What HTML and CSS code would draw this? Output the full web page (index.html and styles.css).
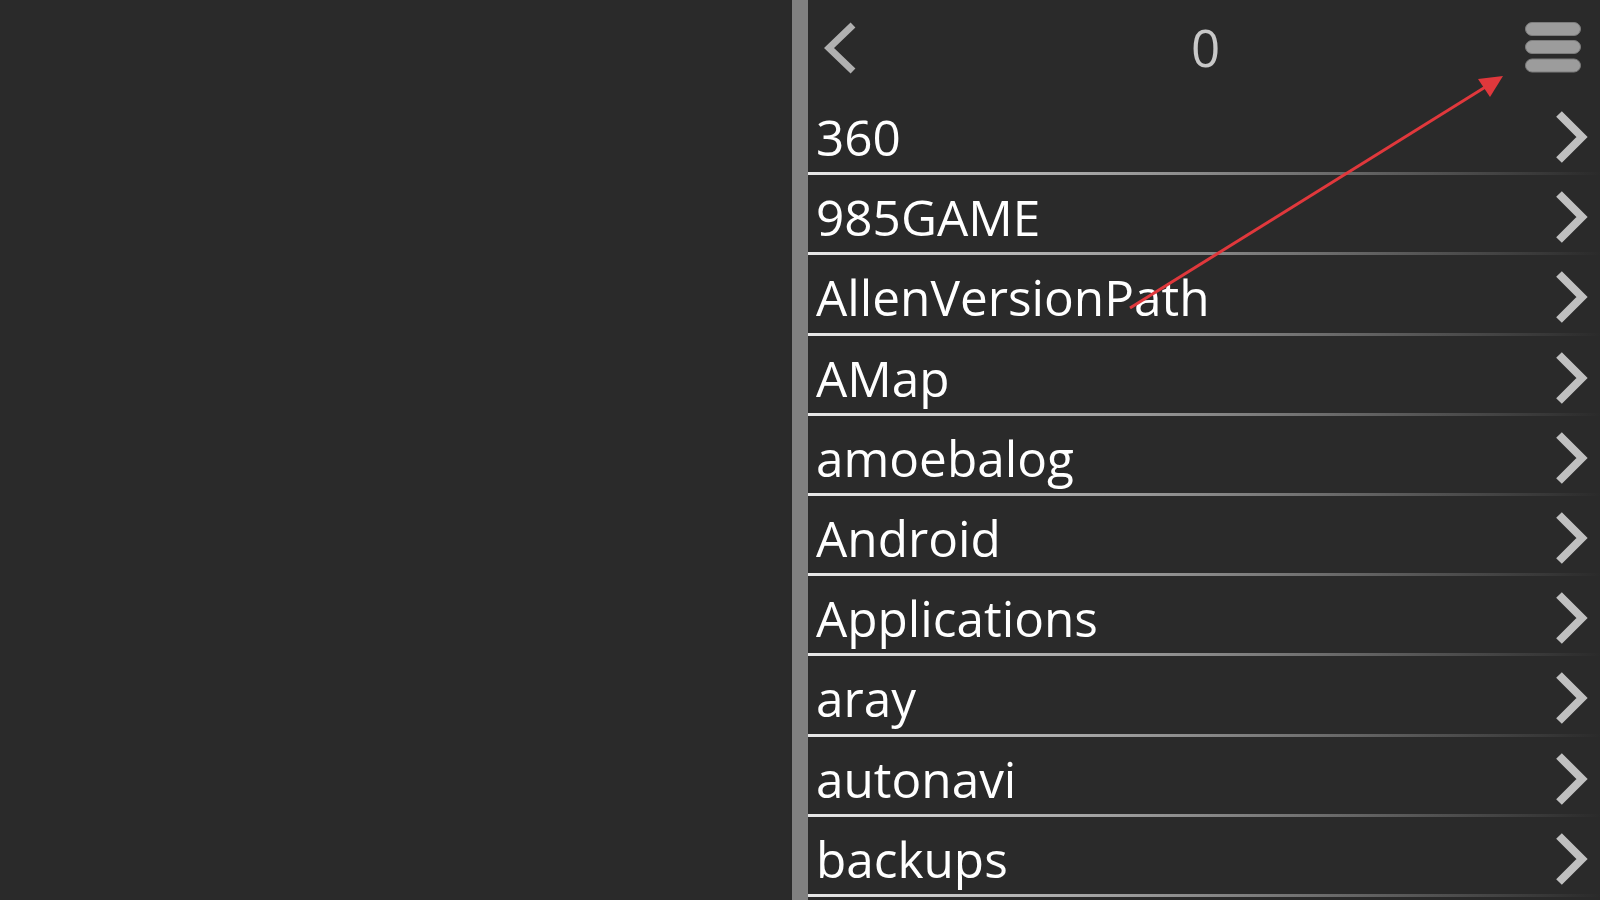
FILE: index.html
```html
<!DOCTYPE html>
<html>
<head>
<meta charset="utf-8">
<link rel="stylesheet" href="styles.css">
</head>
<body>
<div class="app">
  <div class="left-pane"></div>
  <div class="split-bar"></div>
  <div class="panel">
    <div class="header">
      <svg class="back" width="32" height="52" viewBox="0 0 32 52">
        <polyline points="29,3 5,26 29,49" fill="none" stroke="#b0b0b0" stroke-width="7" stroke-linejoin="miter"/>
      </svg>
      <div class="title">0</div>
      <svg class="menu" width="56" height="51" viewBox="0 0 56 51">
        <rect x="0.5" y="0.5" width="55" height="13" rx="6.5" fill="#9c9c9c" stroke="#7c7c7c"/>
        <rect x="0.5" y="18.5" width="55" height="13" rx="6.5" fill="#9c9c9c" stroke="#7c7c7c"/>
        <rect x="0.5" y="37" width="55" height="13" rx="6.5" fill="#9c9c9c" stroke="#7c7c7c"/>
      </svg>
    </div>
    <div class="list">
      <div class="row"><span class="label">360</span><svg class="chev" width="32" height="52" viewBox="0 0 32 52"><polyline points="3,3 26,26 3,49" fill="none" stroke="#c0c0c0" stroke-width="8"/></svg></div>
      <div class="row"><span class="label">985GAME</span><svg class="chev" width="32" height="52" viewBox="0 0 32 52"><polyline points="3,3 26,26 3,49" fill="none" stroke="#c0c0c0" stroke-width="8"/></svg></div>
      <div class="row"><span class="label">AllenVersionPath</span><svg class="chev" width="32" height="52" viewBox="0 0 32 52"><polyline points="3,3 26,26 3,49" fill="none" stroke="#c0c0c0" stroke-width="8"/></svg></div>
      <div class="row"><span class="label">AMap</span><svg class="chev" width="32" height="52" viewBox="0 0 32 52"><polyline points="3,3 26,26 3,49" fill="none" stroke="#c0c0c0" stroke-width="8"/></svg></div>
      <div class="row"><span class="label">amoebalog</span><svg class="chev" width="32" height="52" viewBox="0 0 32 52"><polyline points="3,3 26,26 3,49" fill="none" stroke="#c0c0c0" stroke-width="8"/></svg></div>
      <div class="row"><span class="label">Android</span><svg class="chev" width="32" height="52" viewBox="0 0 32 52"><polyline points="3,3 26,26 3,49" fill="none" stroke="#c0c0c0" stroke-width="8"/></svg></div>
      <div class="row"><span class="label">Applications</span><svg class="chev" width="32" height="52" viewBox="0 0 32 52"><polyline points="3,3 26,26 3,49" fill="none" stroke="#c0c0c0" stroke-width="8"/></svg></div>
      <div class="row"><span class="label">aray</span><svg class="chev" width="32" height="52" viewBox="0 0 32 52"><polyline points="3,3 26,26 3,49" fill="none" stroke="#c0c0c0" stroke-width="8"/></svg></div>
      <div class="row"><span class="label">autonavi</span><svg class="chev" width="32" height="52" viewBox="0 0 32 52"><polyline points="3,3 26,26 3,49" fill="none" stroke="#c0c0c0" stroke-width="8"/></svg></div>
      <div class="row"><span class="label">backups</span><svg class="chev" width="32" height="52" viewBox="0 0 32 52"><polyline points="3,3 26,26 3,49" fill="none" stroke="#c0c0c0" stroke-width="8"/></svg></div>
    </div>
  </div>
</div>
<svg class="annotation" width="1600" height="900" viewBox="0 0 1600 900">
  <line x1="1130" y1="308" x2="1487" y2="86" stroke="#e0383c" stroke-width="3"/>
  <polygon points="1503,76 1478,79 1490,97" fill="#e0383c"/>
</svg>
</body>
</html>
```

FILE: styles.css
```css
html, body {
  margin: 0;
  padding: 0;
  background: #2a2a2a;
  width: 1600px;
  height: 900px;
  overflow: hidden;
}

.app {
  display: flex;
  width: 1600px;
  height: 900px;
  font-family: "Open Sans", "Noto Sans", "DejaVu Sans", sans-serif;
}

.left-pane {
  width: 792px;
  flex: none;
  background: #2a2a2a;
}

.split-bar {
  width: 16px;
  flex: none;
  background: #808080;
}

.panel {
  flex: 1;
  display: flex;
  flex-direction: column;
  background: #2a2a2a;
  overflow: hidden;
}

.header {
  height: 95px;
  flex: none;
  box-sizing: border-box;
  padding: 22px 19px 0 16px;
  display: grid;
  grid-template-columns: 1fr auto 1fr;
  align-items: start;
}

.back {
  display: block;
  justify-self: start;
}

.title {
  font-size: 51px;
  line-height: 51px;
  color: #c8c8c8;
  padding-left: 6px;
}

.menu {
  display: block;
  justify-self: end;
}

.list {
  display: flex;
  flex-direction: column;
}

.row {
  height: 80.2px;
  flex: none;
  box-sizing: border-box;
  display: flex;
  align-items: flex-start;
  padding-left: 8px;
  padding-right: 12px;
  border-bottom: 3px solid #888;
  border-image: linear-gradient(to right, #e8e8e8, #2a2a2a) 1;
}

.label {
  font-size: 49.5px;
  line-height: 73px;
  padding-top: 6px;
  color: #ffffff;
}

.chev {
  display: block;
  margin-left: auto;
  margin-top: 16px;
}

.annotation {
  position: absolute;
  left: 0;
  top: 0;
  pointer-events: none;
}
```
